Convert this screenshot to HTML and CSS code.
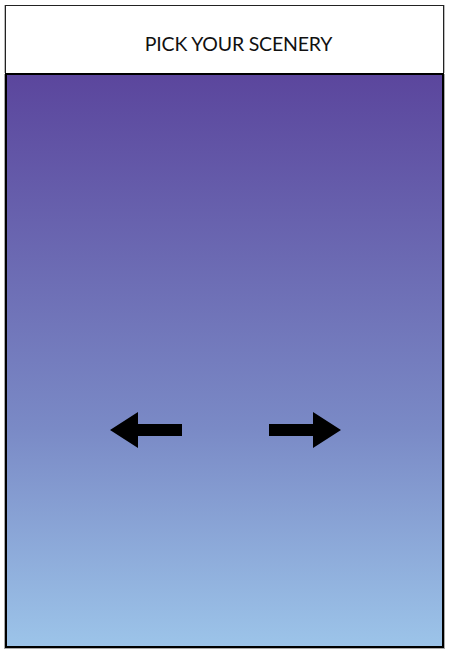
FILE: index.html
```html
<!DOCTYPE html>
<html>
  <head>
    <meta charset="utf-8" />
    <title>Pick your scenery</title>
    <link rel="stylesheet" href="styles.css">
  </head>
  <body>
    <div id="frame">
      <div id="title-bar">
        <h1 id="title">PICK YOUR SCENERY</h1>
      </div>
      <div id="scenery">
        <div id="arrows">
          <button class="arrow" id="prev" aria-label="previous">
            <svg width="72" height="36" viewBox="0 0 72 36">
              <polygon points="0,18 28,0 28,12 72,12 72,24 28,24 28,36" fill="#000" />
            </svg>
          </button>
          <button class="arrow" id="next" aria-label="next">
            <svg width="72" height="36" viewBox="0 0 72 36">
              <polygon points="72,18 44,0 44,12 0,12 0,24 44,24 44,36" fill="#000" />
            </svg>
          </button>
        </div>
      </div>
    </div>
  </body>
</html>
```

FILE: styles.css
```css
body {
  margin: 0;
  padding: 5px;
  background-color: #fff;
  font-family: Lato, "Open Sans", sans-serif;
}
#frame {
  width: 439px;
  display: flex;
  flex-direction: column;
}
#title-bar {
  height: 68px;
  border: 1px solid #222;
  border-bottom: none;
  background-color: #fff;
  display: flex;
  align-items: center;
  justify-content: center;
  padding-left: 28px;
  padding-top: 8px;
  box-sizing: border-box;
  box-shadow: -1px 0 0 #bbb, 1px 0 0 #bbb;
}
#title {
  margin: 0;
  font-weight: normal;
  font-size: 19.5px;
  color: #111;
  letter-spacing: -0.2px;
}
#scenery {
  height: 571px;
  border: 2px solid #000;
  background: linear-gradient(to bottom, rgb(91, 70, 157), rgb(122, 138, 198) 62%, rgb(156, 196, 233));
  display: flex;
  align-items: center;
  justify-content: center;
  box-shadow: -1px 1px 0 #aaa, 1px 1px 0 #aaa;
}
#arrows {
  display: flex;
  gap: 87px;
  margin-top: 138px;
  margin-left: 2px;
}
.arrow {
  padding: 0;
  border: none;
  background: none;
  cursor: pointer;
  display: block;
}
.arrow svg {
  display: block;
}
```
